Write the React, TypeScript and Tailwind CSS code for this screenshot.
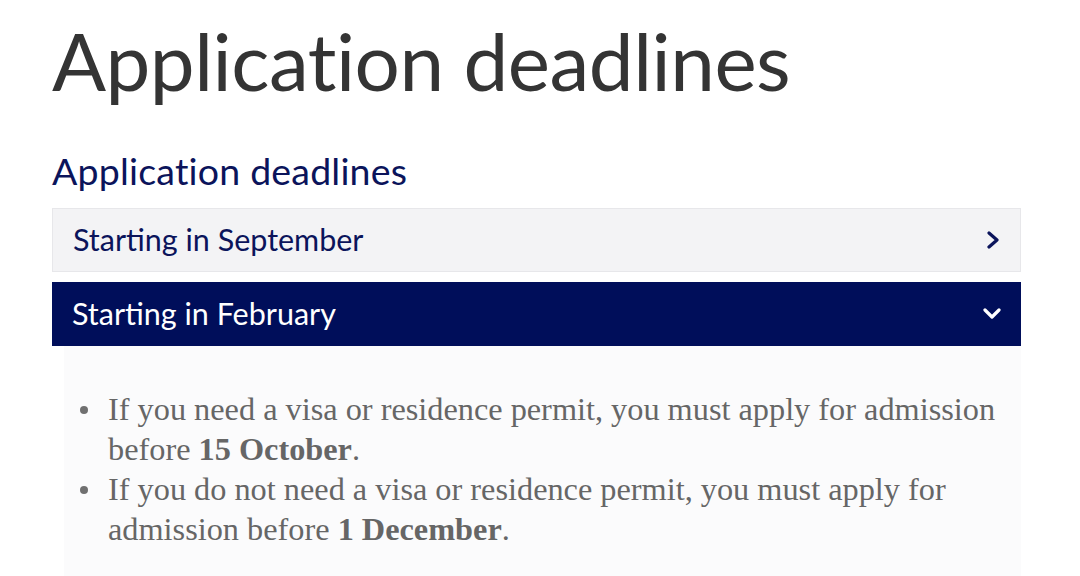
import React from 'react';

const sans = { fontFamily: 'Lato, "Noto Sans", sans-serif' };

const ChevronRight = () => (
  <svg width="14" height="18" viewBox="0 0 14 18" fill="none">
    <polyline points="3,2 11,9 3,16" stroke="currentColor" strokeWidth="3.2" strokeLinecap="round" strokeLinejoin="round" />
  </svg>
);

const ChevronDown = () => (
  <svg width="18" height="14" viewBox="0 0 18 14" fill="none">
    <polyline points="2,3 9,10 16,3" stroke="currentColor" strokeWidth="3.2" strokeLinecap="round" strokeLinejoin="round" />
  </svg>
);

const Bullet = () => (
  <span className="w-[28px] shrink-0 flex pt-[17px]">
    <span className="w-[8px] h-[8px] rounded-full bg-[#707070]" />
  </span>
);

const App = () => {
  return (
    <div className="w-[1080px] h-[576px] overflow-hidden bg-white">
      <div className="pl-[52px] w-[1021px]">
        <h1 className="text-[#343434] text-[80px] leading-none pt-[20px] tracking-[-0.5px]" style={sans}>
          Application deadlines
        </h1>

        <h2 className="text-[#0b145b] text-[37.5px] leading-none mt-[52px] tracking-[0.2px]" style={sans}>
          Application deadlines
        </h2>

        <div className="mt-[18px] flex flex-col gap-[10px]">
          <button className="h-[64px] w-full flex items-center justify-between pl-[20px] pr-[20px] bg-[#f3f3f5] border border-[#e7e7ea] text-[#0b145b]">
            <span className="text-[30.5px]" style={sans}>Starting in September</span>
            <ChevronRight />
          </button>
          <button className="h-[64px] w-full flex items-center justify-between pl-[20px] pr-[20px] bg-[#000e5a] text-white">
            <span className="text-[30.5px]" style={sans}>Starting in February</span>
            <ChevronDown />
          </button>
        </div>

        <div className="ml-[12px] bg-[#fbfbfc] pt-[43px] pb-[40px] pl-[16px] pr-[20px]">
          <ul className="font-['Liberation_Serif',serif] text-[#666666] text-[32.3px] leading-[40px]">
            <li className="flex">
              <Bullet />
              <span>
                If you need a visa or residence permit, you must apply for admission before{' '}
                <strong className="font-bold">15 October</strong>.
              </span>
            </li>
            <li className="flex">
              <Bullet />
              <span>
                If you do not need a visa or residence permit, you must apply for admission before{' '}
                <strong className="font-bold">1 December</strong>.
              </span>
            </li>
          </ul>
        </div>
      </div>
    </div>
  );
};

export default App;
